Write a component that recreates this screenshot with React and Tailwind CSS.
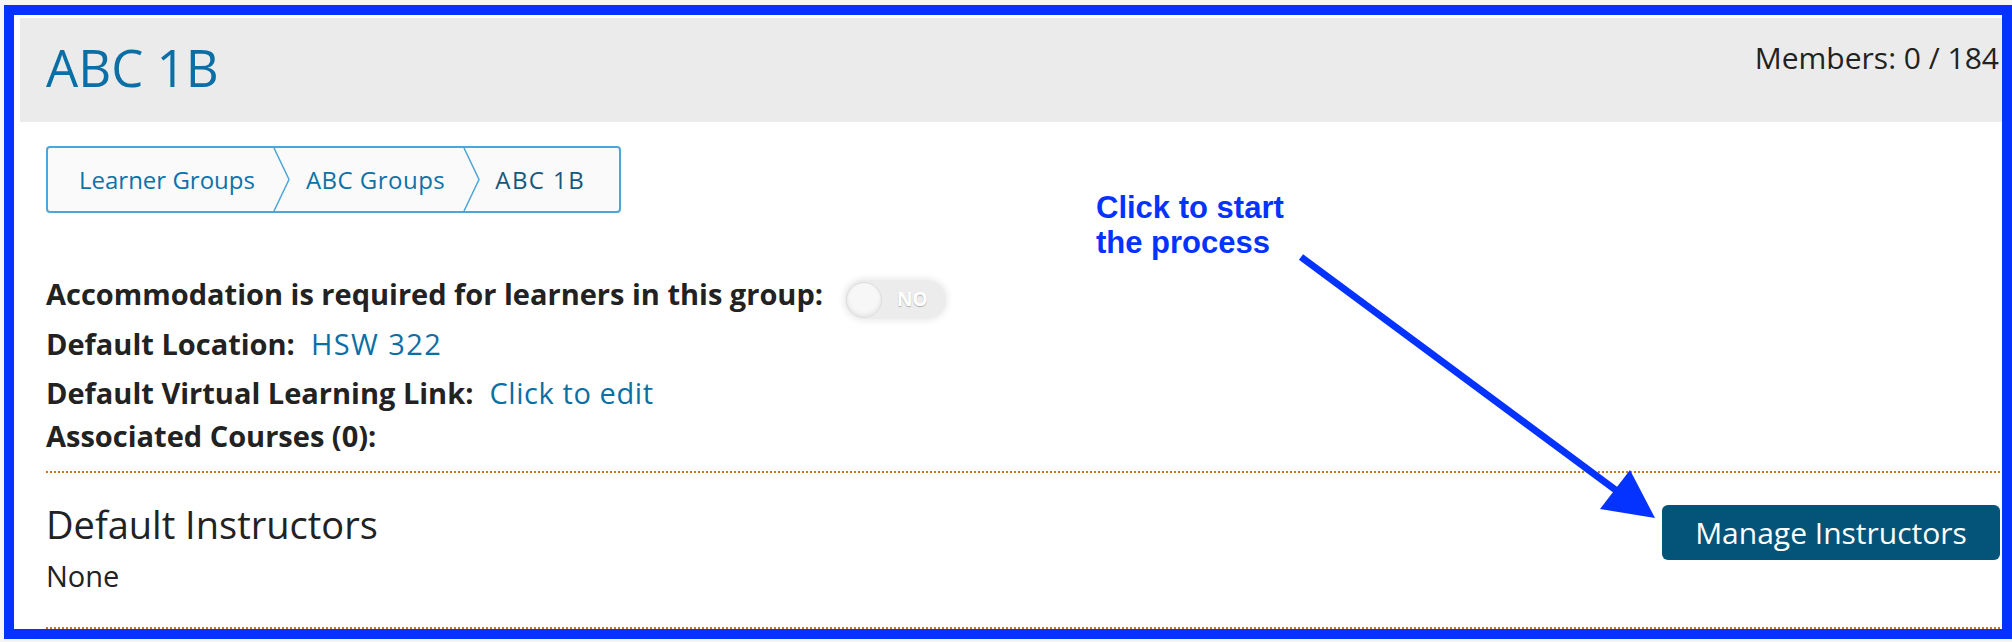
import React from 'react';

const crumbs = ['Learner Groups', 'ABC Groups', 'ABC 1B'];

function Chevron() {
  return (
    <svg className="h-full w-[17px] shrink-0" viewBox="0 0 17 63" preserveAspectRatio="none">
      <polyline points="1,0 16,31.5 1,63" fill="none" stroke="#4da6d8" strokeWidth="1.5" />
    </svg>
  );
}

function Toggle() {
  return (
    <div className="ml-[22px] mt-[11px] flex h-[39px] w-[101px] shrink-0 items-center rounded-full bg-[#ececec] pl-[1px] shadow-[0_0_6px_2px_rgba(0,0,0,0.08)]">
      <div className="h-[36px] w-[36px] rounded-full border border-[#dcdcdc] bg-[#f7f7f7] shadow-[inset_0_-2px_4px_rgba(0,0,0,0.08)]" />
      <span className="ml-[15px] text-[19px] font-bold leading-none text-white [text-shadow:0_1px_1px_rgba(0,0,0,0.25)]">NO</span>
    </div>
  );
}

export default function App() {
  return (
    <div className="relative h-[642px] w-[2012px] overflow-hidden bg-[#f5f5f5] pl-[4px] pt-[5px] font-['Open_Sans',sans-serif] text-[#222]">
      <div className="h-[634px] w-[2008px] overflow-hidden border-[10px] border-[#0433ff] bg-white pl-[6px] pt-[3px]">
        {/* header */}
        <div className="flex h-[104px] items-start justify-between bg-[#ebebeb] pl-[26px] pr-[3px]">
          <h1 className="mt-[24px] text-[51px] leading-[51px] text-[#0b6fa6]">ABC 1B</h1>
          <div className="mt-[25px] whitespace-nowrap text-[30px] leading-[30px] text-[#222]">Members: 0 / 184</div>
        </div>

        <div className="pl-[26px] pr-[2px]">
          {/* breadcrumbs */}
          <div className="mt-[24px] inline-flex h-[67px] items-stretch rounded-[4px] border-2 border-[#4da6d8] bg-[#fafafa] text-[24px]">
            <span className="flex items-center pl-[31px] pr-[18px] text-[#0b72aa]">{crumbs[0]}</span>
            <Chevron />
            <span className="flex items-center pl-[16px] pr-[18px] tracking-[0.02em] text-[#0b72aa]">{crumbs[1]}</span>
            <Chevron />
            <span className="flex items-center pl-[15px] pr-[34px] tracking-[0.06em] text-[#15587e]">{crumbs[2]}</span>
          </div>

          {/* details */}
          <div className="mt-[56px] text-[29px] leading-[49px]">
            <div className="flex items-start">
              <span className="whitespace-nowrap font-bold">Accommodation is required for learners in this group:</span>
              <Toggle />
            </div>
            <div className="flex">
              <span className="font-bold">Default Location:</span>
              <a className="ml-[16px] tracking-[0.05em] text-[#0b6fa6]">HSW 322</a>
            </div>
            <div className="flex">
              <span className="font-bold">Default Virtual Learning Link:</span>
              <a className="ml-[16px] tracking-[0.02em] text-[#0b6fa6]">Click to edit</a>
            </div>
            <div className="font-bold leading-[37px]">Associated Courses (0):</div>
          </div>

          <div className="mt-[17px] border-t-2 border-dotted border-[#cf7317]" />

          {/* instructors */}
          <div className="flex items-start justify-between">
            <div>
              <h2 className="mt-[32px] text-[38px] leading-[38px]">Default Instructors</h2>
              <p className="mt-[18px] text-[29px] leading-[29px]">None</p>
            </div>
            <button className="mt-[32px] h-[55px] w-[338px] rounded-[6px] bg-[#045479] text-[30px] text-white">
              Manage Instructors
            </button>
          </div>

          <div className="mt-[37px] border-t-2 border-dotted border-[#cf7317]" />
        </div>
      </div>

      {/* annotation */}
      <div className="absolute left-[1096px] top-[190px] font-['Liberation_Sans',Arial,sans-serif] text-[31px] font-bold leading-[35px] text-[#0433ff]">
        Click to start
        <br />
        the process
      </div>
      <svg className="pointer-events-none absolute left-0 top-0" width="2012" height="642">
        <line x1="1301" y1="257" x2="1617" y2="491" stroke="#0433ff" strokeWidth="7" />
        <polygon points="1655,518 1600,509 1630,470" fill="#0433ff" />
      </svg>
    </div>
  );
}
